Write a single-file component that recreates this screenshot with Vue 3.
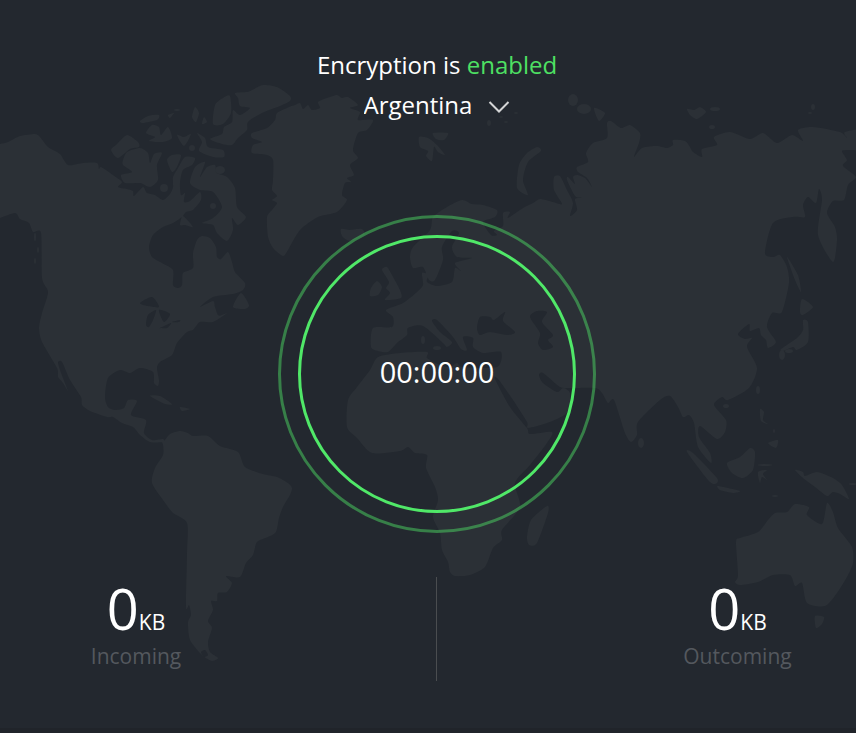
<script setup>
import { ref } from 'vue'

const location = ref('Argentina')
const locations = ['Argentina', 'Australia', 'Brazil', 'Canada', 'Germany', 'Japan']
const stats = [
  { label: 'Incoming', value: 0, unit: 'KB' },
  { label: 'Outcoming', value: 0, unit: 'KB' },
]

// Coastlines as x,y pairs; each string is one closed shape.
const land = [
  // North America
  '-10,146 0,144 8,142 20,136 35,134 40,137 48,147 60,154 68,165 83,163 97,163 99,169 101,167 113,175 122,182 118,187 127,189 133,191 134,196 143,187 147,193 155,195 163,200 170,194 173,187 173,177 178,168 185,157 195,158 192,165 183,170 180,183 181,195 185,193 184,202 190,201 200,192 201,200 193,210 186,212 182,217 173,223 163,227 153,235 149,247 152,257 162,263 173,270 173,285 178,288 182,285 183,273 193,268 193,253 197,240 202,236 210,238 216,247 217,257 221,259 228,252 232,262 235,272 245,283 243,290 233,294 213,297 200,307 213,301 215,307 218,315 222,316 213,319 227,313 213,322 200,322 193,330 187,332 177,343 172,355 160,362 157,368 159,380 158,386 154,383 153,372 140,368 130,373 120,370 108,378 105,397 108,407 115,410 124,408 128,400 137,401 131,415 146,420 144,433 152,440 163,439 163,442 150,442 140,435 133,427 122,423 113,417 107,417 90,411 82,405 81,397 70,380 62,362 58,363 63,378 68,391 63,383 58,377 57,368 42,342 39,328 42,313 48,292 42,278 41,233 33,232 29,223 20,219 15,213 0,218 -10,220',
  // South America
  '161,440 164,441 170,434 180,431 188,433 193,436 208,436 220,446 238,452 245,467 263,474 277,477 288,483 292,488 290,495 283,507 279,518 276,532 268,537 257,542 253,555 246,563 240,577 226,576 232,583 227,592 218,593 217,601 211,601 213,610 208,621 212,628 208,642 210,652 218,658 212,661 202,655 190,640 188,622 191,615 189,605 186,607 187,553 187,523 173,513 163,500 152,483 155,468 163,455 163,445',
  // Greenland
  '252,133 267,128 275,120 277,113 289,107 295,105 300,103 303,109 308,105 312,110 320,108 318,102 327,98 337,95 342,98 348,97 358,105 350,108 360,112 358,120 373,120 367,130 358,133 353,150 358,158 350,165 354,175 347,178 351,182 345,183 342,195 347,200 337,212 318,217 300,230 288,250 283,256 273,248 268,237 267,217 272,210 277,203 272,200 277,196 272,190 273,180 273,160 267,155 252,153 253,145 262,142 252,138',
  // Canadian Arctic
  '235,93 247,92 252,90 263,85 277,87 290,96 290,101 280,106 262,113 248,122 247,130 238,138 232,145 222,144 210,139 222,134 224,127 232,122 233,110 240,115 250,108 240,106 238,98',
  '230,96 231,113 223,124 213,124 215,105 223,98',
  '140,121 148,116 159,115 157,120 143,123',
  '168,115 174,113 170,118',
  '195,107 199,113 196,122 192,117',
  '204,117 207,122 202,124',
  '146,133 152,125 159,127 161,135 168,127 172,138 163,142 149,141 155,137',
  '177,135 184,137 191,134 184,146',
  '197,133 205,138 208,147 223,150 224,157 213,157 199,151 202,142',
  '127,135 138,142 139,147 130,149 118,158 111,150 117,144',
  '123,160 127,152 140,148 148,153 150,163 154,154 162,153 157,165 158,180 150,187 140,183 125,183 121,175 132,172 123,165',
  '167,160 172,155 181,155 177,167 172,172',
  '190,183 195,167 205,162 200,177 207,167 215,165 217,173 227,177 235,188 237,207 246,217 238,225 232,218 233,230 227,241 217,233 213,225 202,223 213,218 222,207 213,192 200,190',
  '180,225 183,216 193,227 185,225',
  '233,307 241,293 249,305 245,309',
  // Caribbean
  '150,396 160,396 172,404 165,404',
  '180,407 190,409 182,411',
  // North Atlantic and Arctic islands
  '341,229 350,230 362,229 364,235 350,241 342,236',
  '419,137 428,138 437,145 445,155 438,152 434,147 432,161 426,156 428,151 420,147',
  '433,133 448,133 444,140 436,139',
  '537,147 541,151 528,162 523,180 528,195 517,188 519,165 527,153',
  '594,108 605,113 599,121',
  '687,109 694,110 700,107 706,112 697,119 690,115',
  '382,270 387,267 392,275 400,290 401,298 385,300 390,293 386,288 389,282',
  '371,288 377,281 382,287 378,295 370,296',
  // Europe, Asia and Africa
  '410,257 413,247 430,230 433,217 447,207 462,200 472,204 483,205 497,210 495,217 483,222 491,235 497,235 494,231 503,226 503,213 510,212 508,218 523,208 533,203 540,199 553,202 562,204 554,190 554,177 560,176 567,190 573,203 570,216 577,210 575,199 582,198 575,196 567,180 568,177 575,184 573,177 577,175 585,178 592,187 587,178 578,172 577,167 588,162 586,153 593,143 607,138 607,123 611,121 621,128 630,125 640,133 639,143 634,157 642,148 657,146 667,148 673,145 673,140 685,141 690,147 693,152 702,157 702,149 717,145 714,137 730,132 750,139 763,133 777,143 792,135 803,141 798,130 813,127 840,132 847,138 845,132 870,129 870,149 850,150 842,151 847,160 843,166 856,177 848,185 844,200 833,201 827,213 835,227 837,240 833,262 818,235 822,200 819,189 816,203 808,197 803,205 805,217 793,217 773,223 765,253 773,257 780,255 787,267 789,283 782,312 772,313 767,327 776,342 768,348 766,340 761,335 759,328 750,331 749,324 738,334 745,339 752,338 747,347 757,368 749,388 728,400 722,397 714,405 726,420 725,432 717,439 700,426 699,437 710,453 711,463 698,447 694,423 689,415 683,417 678,407 670,396 660,400 638,422 637,435 631,442 625,433 614,400 608,403 602,393 595,388 570,388 560,387 543,373 539,375 543,383 557,392 563,388 570,393 568,412 550,422 528,428 527,422 513,400 498,379 495,379 510,407 527,428 530,434 552,432 547,443 530,465 515,483 520,507 502,530 502,540 493,548 485,567 470,575 455,576 450,572 448,562 442,550 440,533 433,517 438,500 435,487 426,468 427,455 415,453 408,447 400,451 372,453 357,438 347,427 348,400 357,387 370,370 378,357 400,353 427,352 427,358 440,365 450,367 457,363 463,367 497,367 501,352 483,353 473,347 473,338 463,337 467,350 461,349 453,337 437,320 432,321 440,332 452,342 447,347 443,343 423,326 408,328 407,335 397,343 388,352 378,351 371,347 373,328 392,327 393,317 386,310 403,303 417,292 423,285 422,273 428,275 427,282 437,286 452,282 455,268 461,271 455,263 472,258 457,257 452,247 459,233 452,231 442,247 443,260 435,280 429,280 423,267 413,268',
  '547,506 548,513 537,543 529,545 527,537 531,520',
  // East Asia islands
  '787,257 798,275 801,292 795,280',
  '802,299 813,307 803,315 800,312',
  '803,320 808,322 808,342 797,350 793,347 783,351 781,349 797,338 803,330',
  '760,409 764,412 763,420 768,424 761,421',
  '768,443 778,440 776,448',
  // Indonesia and Oceania
  '687,452 693,453 717,478 715,484 708,480',
  '727,463 740,457 750,448 755,452 753,470 743,478 732,473',
  '718,486 740,491 733,493 720,490',
  '758,472 767,470 763,474 767,480 762,477 760,483',
  '795,470 803,472 805,476 817,472 833,478 842,485 849,499 840,494 833,492 827,496 815,487 803,478',
  '736,542 740,538 758,532 768,520 775,513 787,512 795,504 809,507 807,515 822,524 827,503 833,512 838,528 852,547 853,563 847,577 837,593 825,606 807,603 802,583 795,586 790,575 773,575 758,582 740,585 735,582 738,575',
  '815,616 824,617 822,624 816,628',
]

const water = [
  // Great Lakes
  '140,303 152,297 159,307 148,306',
  '146,325 148,315 156,310 153,320 149,327',
  '159,310 170,314 164,322',
  '160,328 171,323 167,328 161,328',
  '172,322 180,320 179,322',
  // Black Sea and Caspian Sea
  '477,328 480,317 490,317 494,320 505,312 503,321 515,332 507,335 490,332 480,335',
  '530,317 537,311 547,312 542,322 553,335 548,340 553,347 543,350 538,343 540,333',
  '201,652 205,650 208,655 204,657',
]

// cx, cy, rx, ry
const islets = [
  [177, 110, 3, 1], [192, 148, 3, 3], [164, 188, 4, 4], [220, 170, 5, 4], [213, 206, 3, 3],
  [35, 237, 1, 4], [38, 250, 1, 3], [35, 261, 1, 3], [501, 117, 2, 1], [506, 122, 2, 1], [516, 113, 2, 1],
  [489, 123, 2, 3], [573, 100, 5, 6], [584, 109, 7, 5], [715, 109, 5, 2], [712, 127, 3, 2], [813, 107, 2, 3],
  [810, 113, 2, 1], [423, 340, 2, 4], [437, 348, 4, 2], [782, 355, 3, 5], [789, 351, 4, 2], [758, 390, 2, 4],
  [726, 406, 3, 2], [641, 443, 3, 5], [774, 431, 1, 2], [765, 465, 7, 1], [853, 484, 4, 1], [775, 496, 3, 1],
]

// Catmull-Rom curve through every point of a closed outline.
function outline(points) {
  const p = points.split(' ').map((pair) => pair.split(',').map(Number))
  const n = p.length
  let d = `M${p[0]}`
  for (let i = 0; i < n; i++) {
    const a = p[(i + n - 1) % n]
    const b = p[i]
    const c = p[(i + 1) % n]
    const e = p[(i + 2) % n]
    const c1 = [b[0] + (c[0] - a[0]) / 8, b[1] + (c[1] - a[1]) / 8]
    const c2 = [c[0] - (e[0] - b[0]) / 8, c[1] - (e[1] - b[1]) / 8]
    d += `C${c1} ${c2} ${c}`
  }
  return d + 'Z'
}

const landPath = land.map(outline).join('')
const waterPath = water.map(outline).join('')
</script>

<template>
  <main class="screen">
    <svg class="map" viewBox="0 0 856 733" preserveAspectRatio="xMidYMid slice" aria-hidden="true">
      <path class="land" :d="landPath" />
      <path class="sea" :d="waterPath" />
      <ellipse v-for="(e, i) in islets" :key="i" class="land" :cx="e[0]" :cy="e[1]" :rx="e[2]" :ry="e[3]" />
    </svg>

    <header class="header">
      <h1 class="status">Encryption is <span class="status-on">enabled</span></h1>
      <div class="picker">
        <select v-model="location" class="picker-select" aria-label="Location">
          <option v-for="name in locations" :key="name">{{ name }}</option>
        </select>
        <svg class="chevron" viewBox="0 0 22 14" aria-hidden="true">
          <path d="M1.5 2 L11 11.5 L20.5 2" />
        </svg>
      </div>
    </header>

    <section class="dial">
      <div class="dial-ring">
        <time class="timer">00:00:00</time>
      </div>
    </section>

    <section class="stats">
      <div v-for="s in stats" :key="s.label" class="stat">
        <p class="amount"><span class="value">{{ s.value }}</span><span class="unit">{{ s.unit }}</span></p>
        <p class="label">{{ s.label }}</p>
      </div>
    </section>
  </main>
</template>

<style>
body {
  margin: 0;
  background: #23282f;
}
</style>

<style scoped>
.screen {
  position: relative;
  box-sizing: border-box;
  min-height: 100vh;
  padding: 47px 0 40px 18px;
  display: flex;
  flex-direction: column;
  align-items: center;
  overflow: hidden;
  border-bottom: 5px solid #20242a;
  background: #23282f;
  color: #fff;
  font-family: "Open Sans", "Noto Sans", sans-serif;
}

.map {
  position: absolute;
  top: 0;
  left: 0;
  width: 100%;
  height: 100vh;
}

.land {
  fill: #2b3036;
}

.sea {
  fill: #23282f;
}

.header,
.dial,
.stats {
  position: relative;
}

.header {
  display: flex;
  flex-direction: column;
  align-items: center;
  gap: 4px;
}

.status {
  margin: 0;
  font-size: 24px;
  font-weight: 400;
  line-height: 36px;
}

.status-on {
  color: #4ee063;
}

.picker {
  display: grid;
  align-items: center;
}

.picker-select {
  grid-area: 1 / 1;
  appearance: none;
  field-sizing: content;
  margin: 0;
  padding: 0 38px 0 0;
  border: 0;
  background: transparent;
  color: inherit;
  font: inherit;
  font-size: 24px;
  line-height: 36px;
  cursor: pointer;
}

.picker-select option {
  color: #23282f;
}

.chevron {
  grid-area: 1 / 1;
  justify-self: end;
  width: 22px;
  height: 14px;
  margin-top: 4px;
  pointer-events: none;
}

.chevron path {
  fill: none;
  stroke: #d4d5d6;
  stroke-width: 2;
}

.dial {
  margin-top: 92px;
  padding: 17px;
  border: 3px solid rgba(80, 232, 104, 0.45);
  border-radius: 50%;
}

.dial-ring {
  display: grid;
  place-items: center;
  width: 272px;
  height: 272px;
  border: 3px solid #50e868;
  border-radius: 50%;
}

.timer {
  padding-bottom: 4px;
  font-size: 29px;
  line-height: 40px;
}

.stats {
  align-self: stretch;
  margin-top: 44px;
  display: grid;
  grid-template-columns: 1fr 1fr;
}

.stat {
  display: flex;
  flex-direction: column;
  align-items: center;
  min-height: 104px;
}

.stat:first-child {
  padding-right: 182px;
  border-right: 1px solid #4a4d50;
}

.stat:last-child {
  padding-left: 182px;
}

.amount {
  display: flex;
  align-items: baseline;
  margin: 0;
}

.value {
  font-size: 56px;
  line-height: 62px;
}

.unit {
  font-size: 21px;
  line-height: 24px;
}

.label {
  margin: 0;
  color: #54585e;
  font-size: 21px;
  line-height: 34px;
}
</style>
